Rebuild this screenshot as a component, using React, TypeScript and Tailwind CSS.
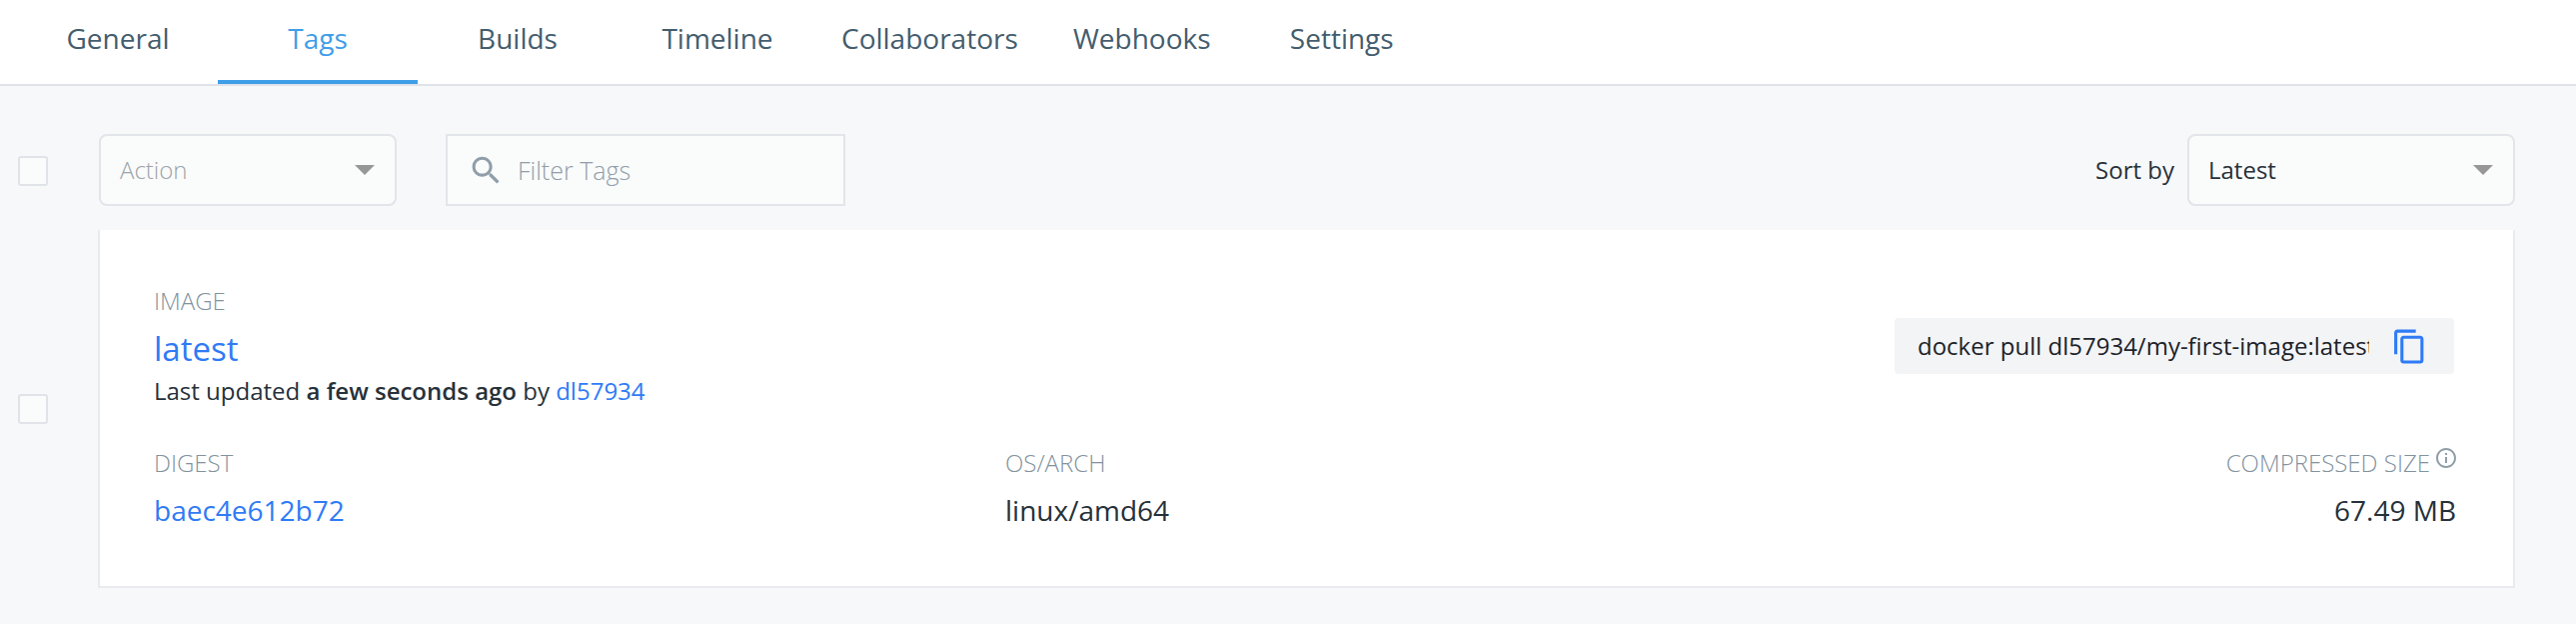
const font = { fontFamily: '"Open Sans", "Noto Sans", sans-serif' };

const tabs = ["General", "Tags", "Builds", "Timeline", "Collaborators", "Webhooks", "Settings"];

function Caret() {
  return (
    <svg width="20" height="10" viewBox="0 0 20 10" className="shrink-0">
      <path d="M0 0h20L10 10z" fill="#979797" />
    </svg>
  );
}

function Label({ children }: { children: React.ReactNode }) {
  return <div className="text-[24px] leading-[32px] text-[#83939e] font-light">{children}</div>;
}

export default function App() {
  return (
    <div style={font} className="min-h-[624px] bg-[#f7f8fa] text-[#27313a]">
      <nav className="h-[86px] bg-white border-b-2 border-[#e0e3e7] pl-[18px] flex">
        {tabs.map((t) => (
          <div
            key={t}
            className={
              "min-w-[200px] h-[84px] px-6 flex items-center justify-center text-[28px] pb-1 box-border border-b-4 " +
              (t === "Tags" ? "text-[#3f9ee8] border-[#3f9ee8]" : "text-[#445d6e] border-transparent")
            }
          >
            {t}
          </div>
        ))}
      </nav>

      <div className="pl-[18px] pr-[61px] pt-[48px] flex items-center h-[144px] pb-[24px] box-border">
        <div className="w-[30px] h-[30px] mt-[2px] border-2 border-[#e0e3e7] bg-[#fafbfb] rounded-[3px] mr-[51px]" />
        <div className="w-[298px] h-[72px] border-2 border-[#e2e5e9] bg-[#fafbfb] rounded-[8px] flex items-center justify-between pl-[19px] pr-[20px]">
          <span className="text-[24px] text-[#9ca3a9] font-light">Action</span>
          <Caret />
        </div>
        <div className="ml-[49px] w-[400px] h-[72px] border-2 border-[#e2e5e9] bg-[#fafbfb] flex items-center pl-[20px] gap-[13px]">
          <svg width="37" height="37" viewBox="0 0 24 24" fill="#8f9ea8" className="shrink-0">
            <path d="M15.5 14h-.79l-.28-.27C15.41 12.59 16 11.11 16 9.5 16 5.91 13.09 3 9.5 3S3 5.91 3 9.5 5.91 16 9.5 16c1.61 0 3.09-.59 4.23-1.57l.27.28v.79l5 4.99L20.49 19l-4.99-5zm-6 0C7.01 14 5 11.99 5 9.5S7.01 5 9.5 5 14 7.01 14 9.5 11.99 14 9.5 14z" />
          </svg>
          <span className="text-[25px] mt-[2px] text-[#909eaa] font-light">Filter Tags</span>
        </div>
        <span className="ml-auto text-[24px] text-[#27313a] mr-[13px]">Sort by</span>
        <div className="w-[328px] h-[72px] border-2 border-[#e2e5e9] bg-[#fafbfb] rounded-[8px] flex items-center justify-between pl-[19px] pr-[20px]">
          <span className="text-[24px] text-[#27313a]">Latest</span>
          <Caret />
        </div>
      </div>

      <div className="pl-[18px] pr-[61px] flex items-center">
        <div className="w-[30px] h-[30px] border-2 border-[#e0e3e7] bg-[#fafbfb] rounded-[3px] mr-[50px] shrink-0" />
        <div className="flex-1 h-[358px] box-border bg-white border-2 border-t-0 border-[#e9ebee] pl-[54px] pr-[57px] pt-[55px]">
          <div className="flex items-start justify-between">
            <div>
              <Label>IMAGE</Label>
              <div className="text-[33px] leading-[40px] text-[#2f7bf5] mt-[12px] font-medium">latest</div>
              <div className="text-[24px] leading-[32px] mt-[6px]">
                Last updated <b className="font-semibold">a few seconds ago</b> by{" "}
                <span className="text-[#2f7bf5]">dl57934</span>
              </div>
            </div>
            <div className="mt-[33px] mr-[2px] w-[560px] h-[56px] rounded-[4px] bg-[#f3f4f6] flex items-center pl-[23px] pr-[26px]">
              <span className="w-[452px] overflow-hidden whitespace-nowrap text-[24px] text-[#1c2329]">
                docker pull dl57934/my-first-image:latest
              </span>
              <svg width="37" height="37" viewBox="0 0 24 24" fill="#2f7bf5" className="ml-auto mt-[1px] shrink-0">
                <path d="M16 1H4c-1.1 0-2 .9-2 2v14h2V3h12V1zm3 4H8c-1.1 0-2 .9-2 2v14c0 1.1.9 2 2 2h11c1.1 0 2-.9 2-2V7c0-1.1-.9-2-2-2zm0 16H8V7h11v14z" />
              </svg>
            </div>
          </div>
          <div className="mt-[40px] grid grid-cols-[852px_1fr_auto]">
            <div>
              <Label>DIGEST</Label>
              <div className="text-[28px] leading-[38px] text-[#2f7bf5] mt-[12px]">baec4e612b72</div>
            </div>
            <div>
              <Label>OS/ARCH</Label>
              <div className="text-[28px] leading-[38px] mt-[12px]">linux/amd64</div>
            </div>
            <div className="text-right">
              <div className="flex items-start justify-end gap-[4px]">
                <Label>COMPRESSED SIZE</Label>
                <svg width="24" height="24" viewBox="0 0 24 24" fill="#8f9ea8" className="shrink-0 -mr-[2px] -mt-[1px]">
                  <path d="M11 7h2v2h-2zm0 4h2v6h-2zm1-9C6.48 2 2 6.48 2 12s4.48 10 10 10 10-4.48 10-10S17.52 2 12 2zm0 18c-4.41 0-8-3.59-8-8s3.59-8 8-8 8 3.59 8 8-3.59 8-8 8z" />
                </svg>
              </div>
              <div className="text-[28px] leading-[38px] mt-[12px]">67.49 MB</div>
            </div>
          </div>
        </div>
      </div>
    </div>
  );
}
